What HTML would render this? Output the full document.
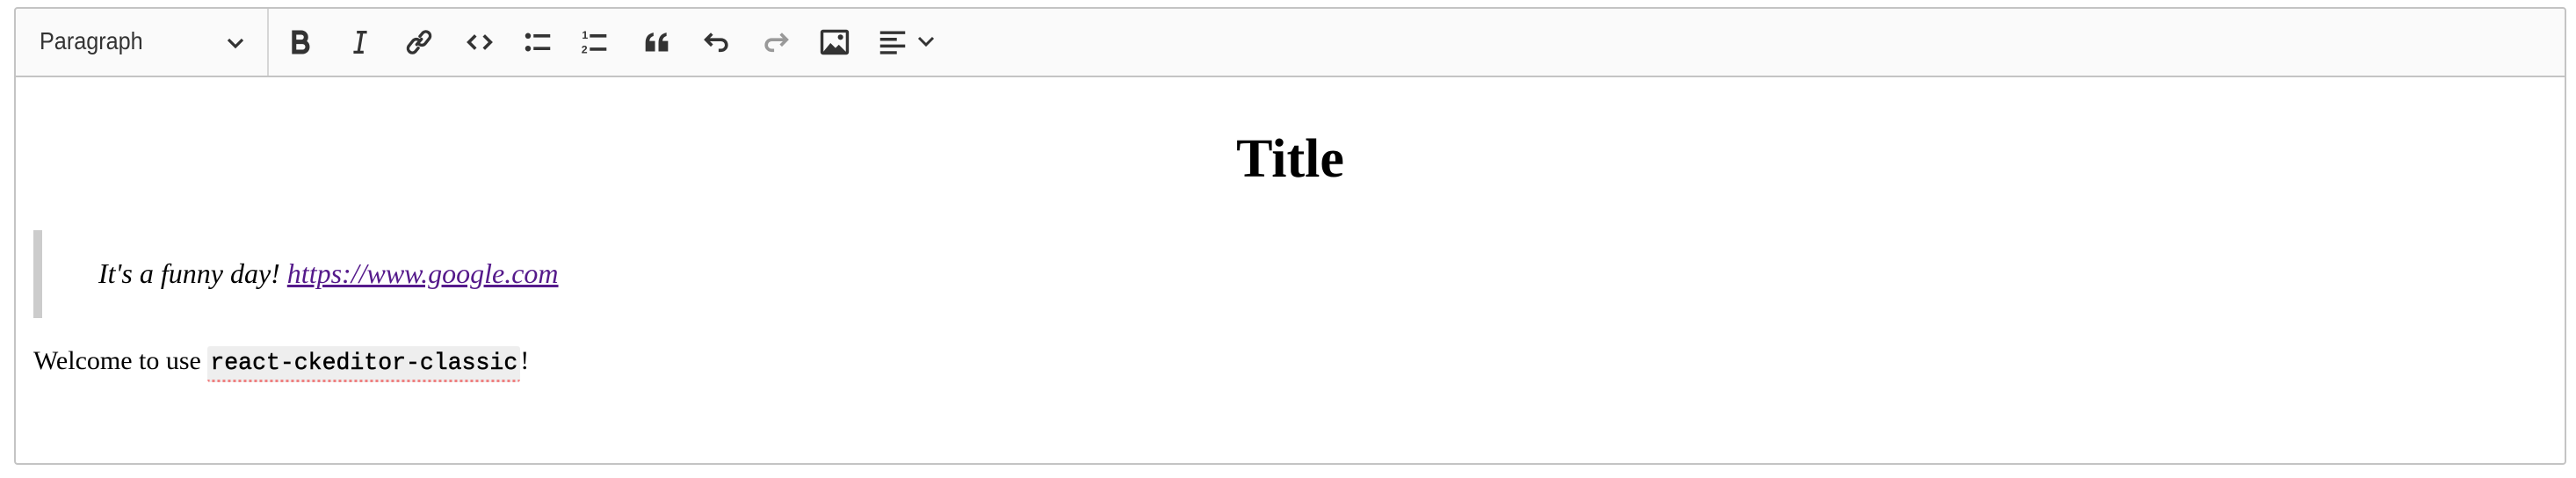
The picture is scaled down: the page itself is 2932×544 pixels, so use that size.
<!DOCTYPE html>
<html><head><meta charset="utf-8"><style>
html,body{margin:0;padding:0;width:2932px;height:544px;background:#fff;overflow:hidden}
.a{position:absolute}
svg.i{position:absolute;top:29px;width:38px;height:38px}
</style></head><body>
<div class="a" style="left:16px;top:8px;width:2901px;height:76px;background:#fafafa;border:2px solid #c4c4c4;border-radius:4px 4px 0 0"></div>
<div class="a" style="left:16px;top:86px;width:2901px;height:439px;background:#fff;border:2px solid #c4c4c4;border-radius:0 0 4px 4px"></div>
<div class="a" style="left:304px;top:10px;width:2px;height:76px;background:#d6d6d6"></div>
<div class="a" style="left:45px;top:33px;font:28px/28px 'Liberation Sans',sans-serif;color:#333;transform:scaleX(0.9);transform-origin:0 0">Paragraph</div>
<svg class="a" style="left:257px;top:42px" width="22" height="14" viewBox="0 0 22 14"><path d="M3 3l8 8 8-8" fill="none" stroke="#333" stroke-width="3.2"/></svg>
<svg class="i" style="left:323px" viewBox="0 0 20 20"><path d="M6.2 4.2h4.3a2.8 2.8 0 010 5.6H6.2zM6.2 9.8h5a3 3 0 010 6H6.2z" fill="none" stroke="#333" stroke-width="2.6"/></svg>
<svg class="i" style="left:391px" viewBox="0 0 20 20"><path d="M8 4h6M6 16h6M11 4l-2 12" fill="none" stroke="#333" stroke-width="1.7"/></svg>
<svg class="i" style="left:458px" viewBox="0 0 20 20"><g fill="none" stroke="#333" stroke-width="1.8" stroke-linecap="round"><path d="M10.5 6.5l1.8-2.2a2.6 2.6 0 014 3.2l-2.6 3.3a2.6 2.6 0 01-3.4.6"/><path d="M9.5 13.5l-1.8 2.2a2.6 2.6 0 01-4-3.2l2.6-3.3a2.6 2.6 0 013.4-.6"/><path d="M8.6 11.4l2.8-3.2"/></g></svg>
<svg class="i" style="left:527px" viewBox="0 0 20 20"><path d="M7.5 6l-4 4 4 4M12.5 6l4 4-4 4" fill="none" stroke="#333" stroke-width="1.9"/></svg>
<svg class="i" style="left:593px" viewBox="0 0 20 20"><circle cx="4.2" cy="6.2" r="1.7" fill="#333"/><circle cx="4.2" cy="13.8" r="1.7" fill="#333"/><path d="M7.5 6.2h10M7.5 13.8h10" stroke="#333" stroke-width="1.9"/></svg>
<svg class="i" style="left:658px" viewBox="0 0 20 20"><text x="2.3" y="8" font-family="Liberation Sans,sans-serif" font-size="6.5" font-weight="bold" fill="#333">1</text><text x="2" y="16.6" font-family="Liberation Sans,sans-serif" font-size="6.5" font-weight="bold" fill="#333">2</text><path d="M7 6.2h10M7 14.2h10" stroke="#333" stroke-width="1.9"/></svg>
<svg class="i" style="left:729px" viewBox="0 0 20 20"><path d="M3 15.5V10.5C3 7 4.5 5 7.8 4.3v2C6.2 6.8 5.5 7.8 5.4 9.3H8.7V15.5zM10.8 15.5V10.5c0-3.5 1.5-5.5 4.8-6.2v2c-1.6.5-2.3 1.5-2.4 3H16.5V15.5z" fill="#333"/></svg>
<svg class="i" style="left:797px" viewBox="0 0 20 20"><path d="M7 5L3.5 8.5 7 12M3.5 8.5h9a3.2 3.2 0 010 6.4H11" fill="none" stroke="#333" stroke-width="1.9"/></svg>
<svg class="i" style="left:864px" viewBox="0 0 20 20"><path d="M13 5l3.5 3.5L13 12M16.5 8.5h-9a3.2 3.2 0 000 6.4H9" fill="none" stroke="#999" stroke-width="1.9"/></svg>
<svg class="i" style="left:931px" viewBox="0 0 20 20"><rect x="2.4" y="3.4" width="15.2" height="13.2" rx=".6" fill="none" stroke="#333" stroke-width="1.8"/><path d="M3 16l4.5-5.5 3 3 2-2L17 16z" fill="#333"/><circle cx="13.5" cy="7" r="1.6" fill="#333"/></svg>
<svg class="i" style="left:997px" viewBox="0 0 20 20"><path d="M2.5 4.3h15M2.5 8.3h10M2.5 12.3h15M2.5 16.3h10" stroke="#333" stroke-width="1.8"/></svg>
<svg class="a" style="left:1043px;top:40px" width="22" height="14" viewBox="0 0 22 14"><path d="M3 3l8 8 8-8" fill="none" stroke="#333" stroke-width="3"/></svg>

<div class="a" style="left:16px;top:150px;width:2905px;text-align:center;font:bold 62px/62px 'Liberation Serif',serif;color:#000">Title</div>
<div class="a" style="left:38px;top:262px;width:10px;height:100px;background:#ccc"></div>
<div class="a" style="left:112px;top:295px;font:italic 32px/32px 'Liberation Serif',serif;color:#000;white-space:nowrap">It's a funny day! <span style="color:#551a8b;text-decoration:underline">https://www.google.com</span></div>
<div class="a" style="left:38px;top:395px;font:30px/31px 'Liberation Serif',serif;color:#000;white-space:nowrap">Welcome to use <span style="font:26.5px/31px 'Liberation Mono',monospace;-webkit-text-stroke:0.5px #000;background:#eee;border-radius:3px;padding:4px 3px;border-bottom:3px dotted #f08080">react-ckeditor-classic</span>!</div>
</body></html>
